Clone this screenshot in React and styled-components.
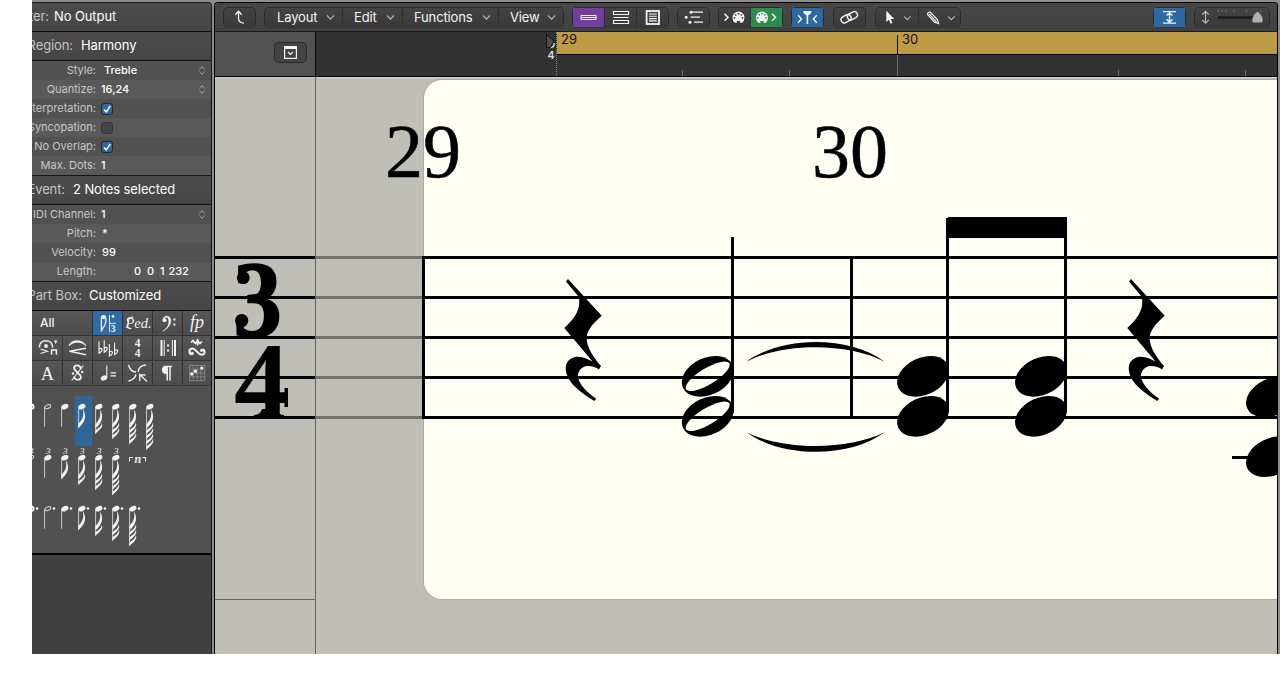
import React from "react";
import styled, { createGlobalStyle, css } from "styled-components";

const GlobalStyle = createGlobalStyle`
  * { box-sizing: border-box; }
  body { margin: 0; background: #fff; font-family: Inter, "Liberation Sans", sans-serif; }
  svg { display: block; overflow: visible; }
`;

/* ---------- window frame ---------- */

const Window = styled.div`
  display: flex;
  gap: 2px;
  width: 1248px;
  height: 654px;
  margin-left: 32px;
  padding: 2px 2px 0 0;
  background: #8d8d8d;
  overflow: hidden;
`;

const Sidebar = styled.aside`
  width: 180px;
  display: flex;
  flex-direction: column;
  background: #404040;
  border-top: 1px solid #161616;
  border-right: 1px solid #161616;
  border-top-right-radius: 4px;
  overflow: hidden;
`;

const Editor = styled.main`
  flex: 1;
  display: flex;
  flex-direction: column;
  border: 1px solid #000;
  border-bottom: 0;
  border-radius: 4px 4px 0 0;
  overflow: hidden;
`;

/* ---------- inspector ---------- */

const SectionHeader = styled.div`
  flex: none;
  display: flex;
  align-items: center;
  height: ${(p) => p.$height}px;
  padding-bottom: 2px;
  background: linear-gradient(#4b4b4b, #464646);
  border-bottom: 1px solid #0c0c0c;
  font-size: 13px;
  letter-spacing: -0.1px;
  white-space: nowrap;
`;

const SectionLabel = styled.span`
  display: flex;
  justify-content: flex-end;
  width: ${(p) => p.$width}px;
  color: #c4c4c4;
  overflow: hidden;
`;

const SectionValue = styled.span`
  margin-left: ${(p) => p.$gap}px;
  color: #fff;
`;

const Params = styled.div`
  flex: none;
  border-bottom: 1px solid #161616;
`;

const ParamRow = styled.div`
  display: flex;
  align-items: center;
  height: 19px;
  padding: 0 5px 2px 0;
  font-size: 11px;
  white-space: nowrap;
  background: #515151;
  &:nth-child(even) { background: #595959; }
`;

const ParamLabel = styled.span`
  display: flex;
  justify-content: flex-end;
  flex: none;
  width: 64px;
  color: #c8c8c8;
  overflow: hidden;
`;

const ParamValue = styled.span`
  flex: 1;
  padding-left: ${(p) => p.$indent}px;
  color: #fff;
  font-weight: 500;
  white-space: pre;
`;

const CheckMark = styled.span`
  width: 12px;
  height: 12px;
  margin: 2px 0 0 5px;
  border-radius: 3px;
  border: 1px solid ${(p) => (p.$on ? "#1c2a38" : "#343434")};
  background: ${(p) => (p.$on ? "#2f689c" : "#454545")};
`;

const CategoryGrid = styled.div`
  flex: none;
  display: grid;
  grid-template-columns: 30px 29px 29px 29px 29px 28px;
  grid-auto-rows: 24px;
  gap: 1px;
  background: #333;
  border-bottom: 1px solid #3a3a3a;
`;

const Category = styled.div`
  display: flex;
  align-items: center;
  justify-content: center;
  color: #f2f2f2;
  background: ${(p) => (p.$active ? "#2f6ba6" : "linear-gradient(#565656, #4c4c4c)")};
  ${(p) =>
    p.$wide &&
    css`
      grid-column: span 2;
      justify-content: flex-start;
      padding: 0 0 1px 8px;
      font-size: 12px;
      font-weight: 500;
    `}
`;

const Parts = styled.div`
  flex: none;
  height: 169px;
  padding-top: 10px;
  background: #515151;
  border-bottom: 2px solid #000;
`;

const PartsRow = styled.div`
  display: flex;
  height: 51px;
  margin-left: -8px;
`;

const PartCell = styled.div`
  width: 17px;
  height: 50px;
  border-radius: 1px;
  background: ${(p) => (p.$selected ? "#2d6699" : "transparent")};
`;

/* ---------- toolbar ---------- */

const Toolbar = styled.div`
  flex: none;
  display: flex;
  align-items: center;
  height: 29px;
  padding: 0 8px 0 9px;
  background: linear-gradient(#474747, #414141);
  border-bottom: 1px solid #1c1c1c;
`;

const ButtonGroup = styled.div`
  display: flex;
  flex: none;
  height: 19px;
  margin-left: ${(p) => p.$gap ?? 8}px;
  border-radius: 4px;
  background: linear-gradient(#434343, #393939);
  box-shadow: 0 0 0 1px #2a2a2a;
  clip-path: inset(-1px round 4px);
`;

const ToolButton = styled.button`
  display: flex;
  align-items: center;
  justify-content: center;
  width: ${(p) => p.$width}px;
  height: 19px;
  padding: 0;
  border: 0;
  border-left: ${(p) => (p.$split ? "1px solid #2f2f2f" : "0")};
  color: #f4f4f4;
  background: ${(p) => p.$tint || "transparent"};
`;

const MenuButton = styled(ToolButton)`
  justify-content: space-between;
  padding: 0 7px 1px ${(p) => (p.$split ? 11 : 12)}px;
  font: 13px Inter, "Liberation Sans", sans-serif;
  letter-spacing: -0.15px;
`;

const Spacer = styled.div`
  flex: 1;
`;

/* ---------- ruler ---------- */

const RulerRow = styled.div`
  flex: none;
  display: flex;
  height: 45px;
  border-bottom: 1px solid #000;
`;

const RulerHead = styled.div`
  display: flex;
  align-items: flex-start;
  justify-content: flex-end;
  width: 101px;
  padding: 11px 9px 0 0;
  background: #525252;
  border-right: 1px solid #000;
`;

const HeadButton = styled.div`
  display: flex;
  align-items: center;
  justify-content: center;
  width: 31px;
  height: 19px;
  border-radius: 4px;
  background: #434343;
  box-shadow: 0 0 0 1px #2a2a2a;
`;

const RulerLead = styled.div`
  display: flex;
  justify-content: flex-end;
  width: 241px;
  background: #323232;
  border-right: 1px dotted #888;
`;

const RulerTrack = styled.div`
  flex: 1;
  background: #323232;
`;

const CycleStrip = styled.div`
  display: flex;
  height: 23px;
  background: #bf9a45;
  border-bottom: 1px solid #000;
  color: #141008;
  font-size: 13px;
  line-height: 15px;
`;

const Bar = styled.div`
  width: ${(p) => p.$width}px;
  padding-left: 4px;
`;

const NextBar = styled.div`
  height: 19px;
  margin-top: 3px;
  padding-left: 4px;
  line-height: 9px;
  border-left: 1px solid #000;
`;

const Ticks = styled.div`
  display: flex;
  align-items: flex-end;
  height: 21px;
`;

const Tick = styled.i`
  width: 1px;
  height: ${(p) => (p.$long ? 21 : 6)}px;
  margin-left: ${(p) => p.$gap}px;
  background: #6a6a6a;
`;

/* ---------- score ---------- */

const Score = styled.div`
  position: relative;
  flex: 1;
  display: flex;
  background: #bfbfb7;
  box-shadow: inset 0 1px #d6d6ce;
  overflow: hidden;
`;

const StaffHead = styled.div`
  width: 101px;
  border-right: 1px solid #666662;
`;

const StaffHeadCell = styled.div`
  height: 523px;
  border-bottom: 1px solid #666662;
`;

const Page = styled.div`
  flex: 1;
  height: 519px;
  margin: 3px 0 0 108px;
  border-radius: 18px 0 0 18px;
  background: #fffff3;
  box-shadow: 0 0 0 1px #aaaaa3;
`;

const Notation = styled.svg`
  position: absolute;
  left: 0;
  top: 0;
`;

/* ---------- small drawings ---------- */

const Stepper = () => (
  <svg width="8" height="9" fill="none" stroke="#aaa" strokeWidth="1">
    <path d="M1.4 4.2 4 1.8 6.6 4.2M1.4 6.8 4 9.2 6.6 6.8" />
  </svg>
);

const Chevron = () => (
  <svg width="9" height="6" fill="none" stroke="#b4b4b4" strokeWidth="1.1">
    <path d="M1 1.5 4.5 5.1 8 1.5" />
  </svg>
);

const Icon = ({ w = 33, h = 21, children }) => (
  <svg width={w} height={h} viewBox={`0 0 ${w} ${h}`} fill="none" stroke="currentColor" strokeWidth="1.3">
    {children}
  </svg>
);

const Check = ({ on }) => (
  <CheckMark $on={on}>
    {on && (
      <svg width="10" height="10" fill="none" stroke="#fff" strokeWidth="1.5">
        <path d="M2 5.4 4.3 7.9 8.3 2" />
      </svg>
    )}
  </CheckMark>
);

const MidiPlug = ({ cx, hole }) => (
  <g stroke="none">
    <path d={`M${cx - 6} 10.5a6 6 0 1 1 12 0q0 3.5-2.4 5.2h-2v-1.6h-3.2v1.6h-2q-2.4-1.7-2.4-5.2z`} fill="currentColor" />
    {[[-4, 0], [-2.8, -3], [0, -4.1], [2.8, -3], [4, 0]].map(([dx, dy]) => (
      <circle key={dx} cx={cx + dx} cy={10.8 + dy} r="0.9" fill={hole} />
    ))}
  </g>
);

const Music = ({ size = 14, x, y, children, italic, bold }) => (
  <text
    x={x}
    y={y}
    textAnchor="middle"
    fontFamily="'Liberation Serif', serif"
    fontSize={size}
    fontStyle={italic ? "italic" : "normal"}
    fontWeight={bold ? 700 : 400}
    fill="currentColor"
    stroke="none"
  >
    {children}
  </text>
);

const FLAG_STEM = [20, 21.4, 27, 32, 37.4, 43];

function PartNote({ flags = 0, hollow, whole, triplet, dotted }) {
  const stemEnd = 10.7 + FLAG_STEM[flags];
  return (
    <svg width="17" height="50" fill="#f4f4f4">
      {whole ? (
        <ellipse cx="6" cy="10.7" rx="3.6" ry="2.3" fill="none" stroke="#f4f4f4" strokeWidth="2" />
      ) : (
        <ellipse
          cx="6.8"
          cy="10.7"
          rx={hollow ? 3.1 : 3.8}
          ry={hollow ? 1.7 : 2.5}
          transform="rotate(-24 6.8 10.7)"
          fill={hollow ? "none" : "#f4f4f4"}
          stroke={hollow ? "#ddd" : "none"}
        />
      )}
      {!whole && <rect x="3.2" y="11" width="0.9" height={stemEnd - 11} fill="#d8d8d8" />}
      {Array.from({ length: flags }, (_, i) => {
        const b = stemEnd - i * 5.3;
        return (
          <path
            key={i}
            d={
              i === flags - 1
                ? `M3.4 ${b}V${b - 4}C5 ${b - 7} 9.6 ${b - 9} 8 13C11.8 ${b - 12} 10.5 ${b - 6} 3.4 ${b}Z`
                : `M3.4 ${b}V${b - 3.2}C5.5 ${b - 5.4} 9.4 ${b - 6.6} 9.8 ${b - 11}C11.4 ${b - 7} 8.5 ${b - 4.6} 3.4 ${b}Z`
            }
          />
        );
      })}
      {dotted && <circle cx="13" cy="10.5" r="1.3" />}
      {triplet && (
        <text x="7.2" y="6.8" textAnchor="middle" fontSize="9" fontStyle="italic" fontFamily="'Liberation Serif', serif">
          3
        </text>
      )}
    </svg>
  );
}

const PART_ROWS = [
  [{ whole: true }, { hollow: true }, {}, { flags: 1, selected: true }, { flags: 2 }, { flags: 3 }, { flags: 4 }, { flags: 5 }],
  [{ hollow: true }, {}, { flags: 1 }, { flags: 2 }, { flags: 3 }, { flags: 4 }].map((n) => ({ ...n, triplet: true })),
  [{ whole: true }, { hollow: true }, {}, { flags: 1 }, { flags: 2 }, { flags: 3 }, { flags: 4 }].map((n) => ({ ...n, dotted: true })),
];

const CATEGORIES = [
  <Icon w={29} h={24}>
    <ellipse cx="10.5" cy="6" rx="2.6" ry="2" fill="currentColor" stroke="none" />
    <path d="M8.4 6V20.5C9.5 15.5 14.5 14 12.6 7" />
    <path d="M16.5 4V21M16.5 12.3H23" strokeWidth="0.9" />
    <circle cx="20" cy="5.4" r="1.3" fill="currentColor" stroke="none" />
    <Music x={20} y={20.6} size={9.5} bold>3</Music>
  </Icon>,
  <Icon w={29} h={24}>
    <Music x={15.5} y={17.3} size={14.5} italic>Ped.</Music>
    <path d="M8.5 17.2C3.5 18.5 3 13.5 6 13M5.5 11C2.8 9 5 5.4 10 6.4" strokeWidth="1.1" />
  </Icon>,
  <Icon w={29} h={24}>
    <path d="M10.3 8.5C10.3 5.6 13 4.8 15 5.4 18.3 6.4 18.6 11 16.5 14.3 15 16.8 12.8 18.5 10 20 14 17.4 16 14.5 15.9 10.4 15.8 6.2 13 5 11.6 7.4Z" fill="currentColor" strokeWidth="0.6" />
    <circle cx="11.5" cy="9.2" r="2" fill="currentColor" stroke="none" />
    <path d="M20.4 8.5h2M20.4 13.5h2" strokeWidth="2" />
  </Icon>,
  <Icon w={28} h={24}>
    <Music x={14} y={17} size={18} italic>fp</Music>
  </Icon>,
  <Icon w={30} h={24}>
    <path d="M7.3 11.5C7.5 2.5 20.5 2.5 20.7 11.5" strokeWidth="1.6" />
    <circle cx="14" cy="10" r="1.9" fill="currentColor" stroke="none" />
    <path d="M8.5 13 15.5 15.3 8.5 17.6" strokeWidth="1.1" />
    <path d="M22 4.5h3.4L23.7 8Z" fill="currentColor" stroke="none" />
    <path d="M19.6 18.8V14h4.8v4.8" strokeWidth="1.5" />
  </Icon>,
  <Icon w={29} h={24}>
    <path d="M6 10C7 3.5 20 2.5 23 10C19 4.8 10 5 6 10Z" fill="currentColor" strokeWidth="0.8" />
    <path d="M23 12.2 6.5 15.3 23 18.8" strokeWidth="1.4" />
  </Icon>,
  <Icon w={29} h={24}>
    {[[6, 17.2], [11.2, 16.2], [16.4, 20], [21.6, 18.6]].map(([x, y]) => (
      <path key={x} d={`M${x} ${y - 12}V${y}C${x + 4.6} ${y - 2.8} ${x + 3.4} ${y - 6.4} ${x} ${y - 4}`} strokeWidth="1.1" />
    ))}
  </Icon>,
  <Icon w={29} h={24}>
    <Music x={14.5} y={11.3} size={11.5} bold>4</Music>
    <Music x={14.5} y={20.6} size={11.5} bold>4</Music>
  </Icon>,
  <Icon w={29} h={24}>
    <path d="M8.5 4V20M22 4V20" strokeWidth="2" />
    <path d="M11.2 4V20M19.4 4V20" strokeWidth="1" />
    <path d="M14 9.5h2.2M14 14.5h2.2" strokeWidth="2.2" />
  </Icon>,
  <Icon w={28} h={24}>
    <path d="M8 6.5 10 4.6 12.3 7.5 14.6 4.6 17 7.5 19 5.5M14.6 3V9.6" strokeWidth="1.7" />
    <path d="M8.2 18.5C5.5 17 6 12.5 9.5 12.6 13.5 12.7 14.5 18.8 18.8 18.8 22 18.8 22.5 14.2 19.6 13.2" strokeWidth="2" />
    <circle cx="9.3" cy="17.4" r="1.6" fill="currentColor" stroke="none" />
    <circle cx="18.6" cy="14.3" r="1.6" fill="currentColor" stroke="none" />
  </Icon>,
  <Icon w={30} h={24}>
    <Music x={15.5} y={18.5} size={18.5}>A</Music>
  </Icon>,
  <Icon w={29} h={24}>
    <path d="M17.6 8C18.5 4.8 12.6 3 11.2 6 9.6 10 19.4 13 17.8 17 16.4 20 10.4 18.6 11.4 15.4" strokeWidth="1.8" />
    <path d="M20.3 4.5 8.7 19.5" strokeWidth="1.1" />
    <circle cx="10" cy="12.5" r="1.2" fill="currentColor" stroke="none" />
    <circle cx="19.2" cy="11" r="1.2" fill="currentColor" stroke="none" />
  </Icon>,
  <Icon w={29} h={24}>
    <ellipse cx="11" cy="17" rx="3.3" ry="2.5" transform="rotate(-20 11 17)" fill="currentColor" stroke="none" />
    <path d="M13.8 16.5V4.5" strokeWidth="1.1" />
    <path d="M17.5 11.8h5.5M17.5 14.8h5.5" strokeWidth="1.2" />
  </Icon>,
  <Icon w={29} h={24}>
    <path d="M5.5 4C6.5 8 9.5 10.8 13 11M23 4C18 4.4 15.4 7 15.2 11M5.5 20C10.2 19 12.5 16.8 13 13.4M24 20.5 16.8 13.6V20M16.8 13.6 22.5 14" strokeWidth="1.3" />
  </Icon>,
  <Icon w={29} h={24}>
    <path d="M17 5.5H13A3.1 3.1 0 0 0 13 12H14.2V19.5M17 5.5V19.5M13 5.5H19" strokeWidth="1.5" />
    <path d="M13 6H14.2V12H13A3 3 0 0 1 13 6Z" fill="currentColor" />
  </Icon>,
  <Icon w={28} h={24}>
    <path d="M6.5 4V20M10.3 4V20M14.1 4V20M17.9 4V20M21.7 4V20M6.5 4.5H21.7M6.5 8.3H21.7M6.5 12.1H21.7M6.5 15.9H21.7M6.5 19.7H21.7" stroke="#8a8a8a" strokeWidth="0.8" />
    <circle cx="8.7" cy="13" r="1.7" fill="currentColor" stroke="none" />
    <circle cx="12.4" cy="10.2" r="1.7" fill="currentColor" stroke="none" />
    <circle cx="18.8" cy="7" r="1.6" fill="currentColor" stroke="none" />
  </Icon>,
];

const REGION_PARAMS = [
  { label: "Style:", value: "Treble", indent: 8, stepper: true },
  { label: "Quantize:", value: "16,24", indent: 5, stepper: true },
  { label: "terpretation:", check: true },
  { label: "Syncopation:", check: false },
  { label: "No Overlap:", check: true },
  { label: "Max. Dots:", value: "1", indent: 5 },
];

const EVENT_PARAMS = [
  { label: "IDI Channel:", value: "1", indent: 5, stepper: true },
  { label: "Pitch:", value: "*", indent: 6 },
  { label: "Velocity:", value: "99", indent: 6 },
  { label: "Length:", value: "0  0  1 \u200a232", indent: 38 },
];

const ParamList = ({ items }) => (
  <Params>
    {items.map((p) => (
      <ParamRow key={p.label}>
        <ParamLabel>{p.label}</ParamLabel>
        {p.value !== undefined ? <ParamValue $indent={p.indent}>{p.value}</ParamValue> : <Check on={p.check} />}
        {p.stepper && <Stepper />}
      </ParamRow>
    ))}
  </Params>
);

/* ---------- score drawing ---------- */

const STAFF_Y = [179, 219, 259, 299, 339];

const Rest = ({ x }) => (
  <path
    transform={`translate(${x} 202)`}
    d="M4 0 37.7 36.7C31 43 24 49 22.7 57.7 22 68 30 79 37 87L35 90.5C29 86.5 16 83.5 13.7 97 15 105.5 23 113.5 32.2 119.8L30.3 122C20 115.5 9 108.5 4 98.5-1 88 2.5 79.5 12 77.8 18 77 23 79.5 28.5 82.5L.3 49C8 42 14.5 34 15.2 25Q15.5 20 14.3 17.3L2 2.6Z"
  />
);

const Head = ({ x, y, hollow }) => (
  <g transform={`translate(${x} ${y})`}>
    <ellipse rx="27.3" ry="18.5" transform="rotate(-25)" />
    {hollow && <ellipse rx="25.2" ry="8.1" transform="rotate(-31)" fill="#fffff3" />}
  </g>
);

const TimeSignature = () => (
  <g fontFamily="'Liberation Serif', serif" fontWeight="700" stroke="#000">
    <text x="18" y="259" fontSize="109" strokeWidth="1.5" textLength="49" lengthAdjust="spacingAndGlyphs">3</text>
    <g stroke="none">
      <circle cx="28.3" cy="200.7" r="6.4" />
      <circle cx="26.7" cy="243.5" r="6.6" />
    </g>
    <text x="19" y="340" fontSize="107" strokeWidth="0" textLength="55" lengthAdjust="spacingAndGlyphs">4</text>
    <g stroke="none">
      <path d="M39 341V338Q46 337.5 47 332H61Q62 337.5 69 338V341Z" />
      <rect x="69.5" y="311" width="3.5" height="19" />
    </g>
  </g>
);

const ScoreDrawing = () => (
  <Notation width="1062" height="577" viewBox="0 0 1062 577">
    {STAFF_Y.map((y) => (
      <g key={y}>
        <rect x="0" y={y} width="100" height="3" />
        <rect x="101" y={y} width="107" height="3" fill="#73736e" />
      </g>
    ))}
    <g fontFamily="'Liberation Serif', serif" fontSize="76" stroke="#000" strokeWidth="0.5">
      <text x="170" y="100">29</text>
      <text x="597" y="100">30</text>
    </g>
    <TimeSignature />
    <rect x="207" y="180" width="3" height="161" />
    <Rest x={349} />
    <Rest x={912} />
    <Head x={492.7} y={299.3} hollow />
    <Head x={492.7} y={339.3} hollow />
    {STAFF_Y.map((y) => (
      <rect key={y} x="207" y={y} width="855" height="3" />
    ))}
    <rect x="516" y="160" width="3" height="176" />
    <rect x="635" y="180" width="3" height="160" />
    <path d="M531.5 284.7C567 258.4 635 258.4 669.5 284.7 633 265.5 568 265.5 531.5 284.7Z" />
    <path d="M531.5 355.3C567 381.3 635 381.3 669.5 355.3 633 373.5 568 373.5 531.5 355.3Z" />
    {[708, 826].map((x) => (
      <g key={x}>
        <Head x={x} y={299.3} />
        <Head x={x} y={339.3} />
        <rect x={x + 23} y="141" width="3" height="194" />
      </g>
    ))}
    <rect x="733" y="140" width="119" height="21" />
    <Head x={1057} y={320} />
    <Head x={1057} y={379.7} />
    <rect x="1017" y="379" width="45" height="3" />
  </Notation>
);

/* ---------- page ---------- */

export default function App() {
  return (
    <>
      <GlobalStyle />
      <Window>
        <Sidebar>
          <SectionHeader $height={29}>
            <SectionLabel $width={17}>ter:</SectionLabel>
            <SectionValue $gap={5}>No Output</SectionValue>
          </SectionHeader>
          <SectionHeader $height={29}>
            <SectionLabel $width={41}>Region:</SectionLabel>
            <SectionValue $gap={8}>Harmony</SectionValue>
          </SectionHeader>
          <ParamList items={REGION_PARAMS} />
          <SectionHeader $height={29}>
            <SectionLabel $width={33}>Event:</SectionLabel>
            <SectionValue $gap={8}>2 Notes selected</SectionValue>
          </SectionHeader>
          <ParamList items={EVENT_PARAMS} />
          <SectionHeader $height={29}>
            <SectionLabel $width={50}>Part Box:</SectionLabel>
            <SectionValue $gap={7}>Customized</SectionValue>
          </SectionHeader>
          <CategoryGrid>
            <Category $wide>All</Category>
            {CATEGORIES.map((drawing, i) => (
              <Category key={i} $active={i === 0}>{drawing}</Category>
            ))}
          </CategoryGrid>
          <Parts>
            {PART_ROWS.map((row, r) => (
              <PartsRow key={r}>
                {row.map(({ selected, ...note }, i) => (
                  <PartCell key={i} $selected={selected}>
                    <PartNote {...note} />
                  </PartCell>
                ))}
                {r === 1 && (
                  <PartCell>
                    <svg width="17" height="50" fill="none" stroke="#f4f4f4">
                      <path d="M3.5 14.5V10.5H7M16.5 10.5H19.5V14.5" />
                      <text x="11.8" y="15.5" textAnchor="middle" fontSize="12" fontWeight="700" fontStyle="italic" fontFamily="'Liberation Serif', serif" fill="#f4f4f4" stroke="none">n</text>
                    </svg>
                  </PartCell>
                )}
              </PartsRow>
            ))}
          </Parts>
        </Sidebar>

        <Editor>
          <Toolbar>
            <ButtonGroup $gap={0}>
              <ToolButton $width={31}>
                <Icon w={31}><path d="M11.3 7.8 14.5 4.3 17.7 7.8M14.5 4.8V11.5Q14.6 15.8 20 16.2" /></Icon>
              </ToolButton>
            </ButtonGroup>
            <ButtonGroup $gap={10}>
              <MenuButton $width={77}>Layout<Chevron /></MenuButton>
              <MenuButton $width={60} $split>Edit<Chevron /></MenuButton>
              <MenuButton $width={96} $split>Functions<Chevron /></MenuButton>
              <MenuButton $width={65} $split>View<Chevron /></MenuButton>
            </ButtonGroup>
            <ButtonGroup $gap={10}>
              <ToolButton $width={31} $tint="#733da0">
                <Icon w={31}><path d="M8 8.5H23V12.5H8ZM8 10.5H23" strokeWidth="1" /></Icon>
              </ToolButton>
              <ToolButton $width={32} $split>
                <Icon w={32}><path d="M8.5 4.5H23.5V7.5H8.5ZM8.5 10.5H23.5M8.5 13.5H23.5V16.5H8.5Z" strokeWidth="1.2" /></Icon>
              </ToolButton>
              <ToolButton $width={32} $split>
                <Icon w={32}>
                  <rect x="9.6" y="4" width="12.4" height="13" strokeWidth="1.8" />
                  <path d="M12 7h7.8M12 9.3h7.8M12 11.6h7.8M12 13.9h7.8" strokeWidth="1.1" />
                </Icon>
              </ToolButton>
            </ButtonGroup>
            <ButtonGroup $gap={10}>
              <ToolButton $width={31}>
                <Icon w={31}>
                  <path d="M13.5 5.2H25M12.5 10.2H22M16 15.2H25" strokeWidth="1.2" />
                  <g fill="currentColor" stroke="none">
                    <circle cx="13" cy="5.2" r="1.5" /><circle cx="8.2" cy="10.2" r="1.5" /><circle cx="12" cy="15.2" r="1.5" />
                  </g>
                </Icon>
              </ToolButton>
            </ButtonGroup>
            <ButtonGroup $gap={10}>
              <ToolButton $width={31}>
                <Icon w={31}><path d="M5.5 6.8 9 10.3 5.5 13.8" strokeWidth="1.5" /><MidiPlug cx={19.5} hole="#3b3b3b" /></Icon>
              </ToolButton>
              <ToolButton $width={32} $split $tint="#2b8c4c">
                <Icon w={32}><MidiPlug cx={11} hole="#2b8c4c" /><path d="M21 6.8 24.5 10.3 21 13.8" strokeWidth="1.5" /></Icon>
              </ToolButton>
            </ButtonGroup>
            <ButtonGroup $gap={10}>
              <ToolButton $width={31} $tint="#2c69a3">
                <Icon w={31}>
                  <path d="M6 8.3 9.5 12 6 15.7M24.8 8.3 21.3 12 24.8 15.7" strokeWidth="1.4" />
                  <path d="M11.5 4H19.3V6L16.2 8.5V17H14.6V8.5L11.5 6Z" fill="currentColor" stroke="none" />
                </Icon>
              </ToolButton>
            </ButtonGroup>
            <ButtonGroup $gap={11}>
              <ToolButton $width={31}>
                <Icon w={31}>
                  <g strokeWidth="1.4">
                    <rect x="6.8" y="8.6" width="10.5" height="6.4" rx="3.2" transform="rotate(-28 12 11.8)" />
                    <rect x="13.2" y="5.6" width="10.5" height="6.4" rx="3.2" transform="rotate(-28 18.5 8.8)" />
                  </g>
                </Icon>
              </ToolButton>
            </ButtonGroup>
            <ButtonGroup $gap={11}>
              <ToolButton $width={42}>
                <Icon w={42}>
                  <path d="M10.3 3.8V15L12.9 12.7 14.7 16.7 16.5 15.9 14.7 12H18.3Z" fill="currentColor" stroke="none" />
                  <path d="M28 9.3 31.3 12.7 34.6 9.3" stroke="#b4b4b4" strokeWidth="1.1" />
                </Icon>
              </ToolButton>
              <ToolButton $width={42} $split>
                <Icon w={42}>
                  <path d="M8.6 7.6Q8.4 5 11.2 5L18.4 12.6 19.6 16.6 15.5 15.2ZM10 6.8 17.5 14.8" strokeWidth="1.2" />
                  <path d="M29 9.3 32.3 12.7 35.6 9.3" stroke="#b4b4b4" strokeWidth="1.1" />
                </Icon>
              </ToolButton>
            </ButtonGroup>
            <Spacer />
            <ButtonGroup>
              <ToolButton $width={31} $tint="#2c69a3">
                <Icon w={31}><path d="M9 4.6H22M9 16.2H22M15.5 6V15M12.5 8.6 15.5 5.8 18.5 8.6M12.5 12.3 15.5 15.1 18.5 12.3" /></Icon>
              </ToolButton>
            </ButtonGroup>
            <ButtonGroup $gap={10}>
              <ToolButton $width={74}>
                <Icon w={74}>
                  <path d="M10.5 4.5V16M7.2 7.7 10.5 4.4 13.8 7.7M7.2 12.9 10.5 16.2 13.8 12.9" stroke="#bbb" strokeWidth="1.2" />
                  <path d="M23.5 3v2M27 3v2M31 3v2M39 3v2M51.5 3v2M65.5 3v2" stroke="#777" strokeWidth="1" />
                  <path d="M24 10.5H60" stroke="#1d1d1d" strokeWidth="2.6" strokeLinecap="round" />
                  <path d="M62.5 4.5Q67.5 8.5 67.5 11.5V14.5Q67.5 15.5 66.5 15.5H58.5Q57.5 15.5 57.5 14.5V11.5Q57.5 8.5 62.5 4.5Z" fill="#b0b0b0" stroke="none" />
                </Icon>
              </ToolButton>
            </ButtonGroup>
          </Toolbar>

          <RulerRow>
            <RulerHead>
              <HeadButton>
                <svg width="13" height="13" fill="none" stroke="#f4f4f4" strokeWidth="1.2">
                  <rect x="0.6" y="0.6" width="11.8" height="11.8" />
                  <path d="M.6 2H12.4" strokeWidth="2" />
                  <path d="M4 6 6.5 8.4 9 6" />
                </svg>
              </HeadButton>
            </RulerHead>
            <RulerLead>
              <svg width="11" height="44">
                <path d="M5.5 15.5Q9.5 15 9 11" fill="none" stroke="#d8d8d8" strokeWidth="1.5" />
                <path d="M1.5 2.5 9 9 5.5 15.5H1.5Z" fill="#4c4c4c" stroke="#111" />
                <text x="2.5" y="27" fontSize="10.5" fontWeight="600" fill="#ddd">4</text>
              </svg>
            </RulerLead>
            <RulerTrack>
              <CycleStrip>
                <Bar $width={340}>29</Bar>
                <NextBar>30</NextBar>
              </CycleStrip>
              <Ticks>
                <Tick $gap={125} /><Tick $gap={106} /><Tick $gap={107} $long /><Tick $gap={220} /><Tick $gap={126} />
              </Ticks>
            </RulerTrack>
          </RulerRow>

          <Score>
            <StaffHead><StaffHeadCell /></StaffHead>
            <Page />
            <ScoreDrawing />
          </Score>
        </Editor>
      </Window>
    </>
  );
}
